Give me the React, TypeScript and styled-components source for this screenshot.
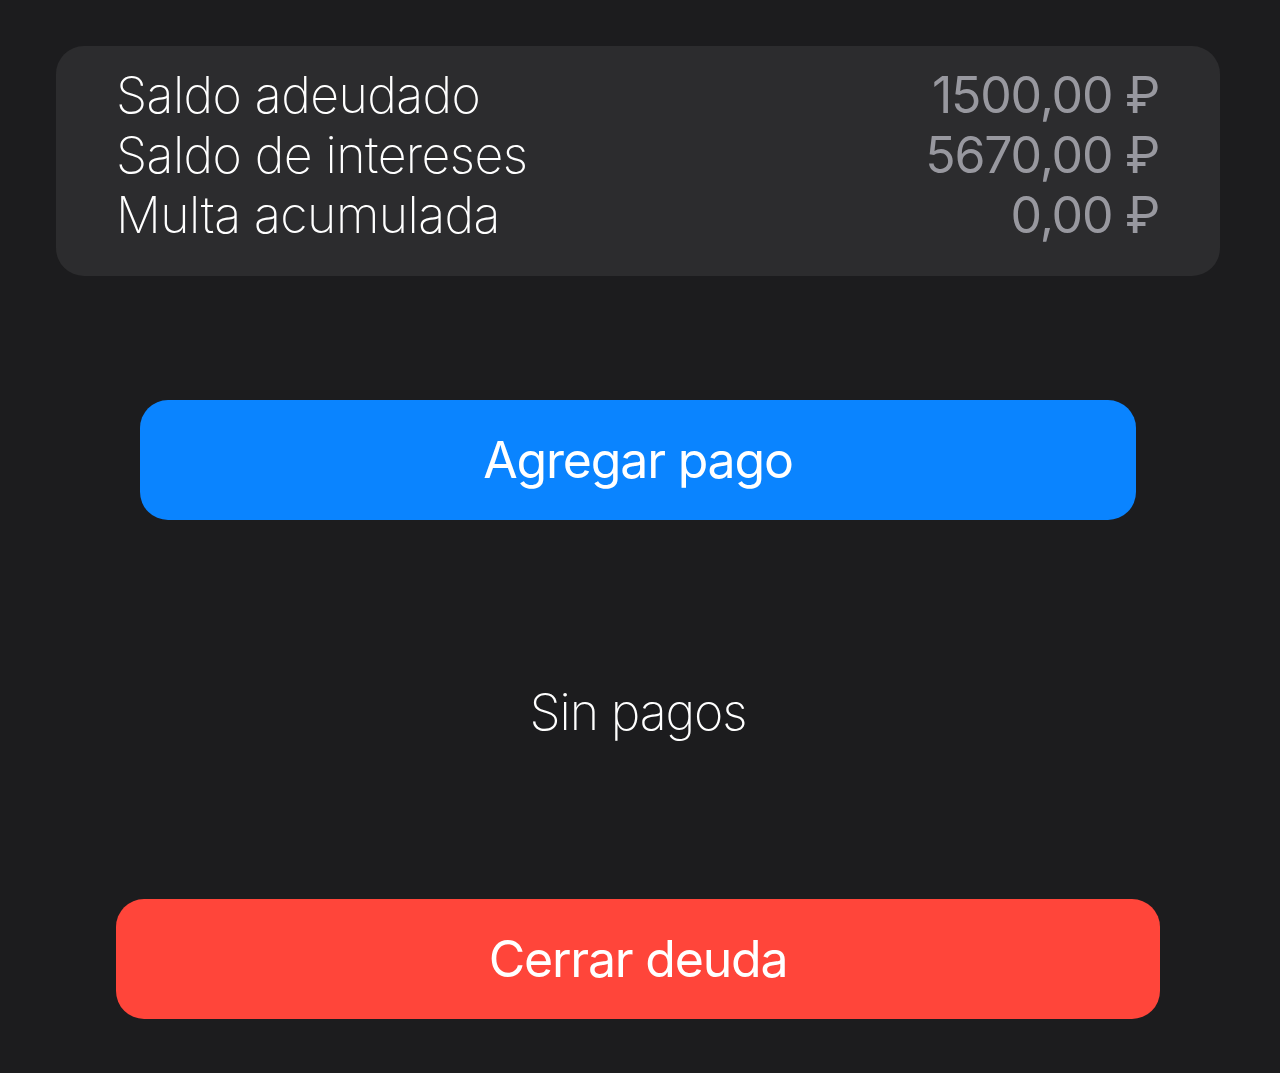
import React from "react";
import styled, { createGlobalStyle } from "styled-components";

const Global = createGlobalStyle`
  html, body {
    margin: 0;
    padding: 0;
    background: #1c1c1e;
  }
  body {
    font-family: Inter, "Noto Sans", "Liberation Sans", sans-serif;
    -webkit-font-smoothing: antialiased;
  }
`;

const Page = styled.div`
  min-height: 1073px;
  box-sizing: border-box;
  padding: 46px 60px 0 56px;
  display: flex;
  flex-direction: column;
  background: #1c1c1e;
`;

const Card = styled.div`
  background: #2c2c2e;
  border-radius: 28px;
  padding: 19px 61px 31px 60px;
  display: flex;
  flex-direction: column;
`;

const Row = styled.div`
  display: flex;
  justify-content: space-between;
  align-items: baseline;
  height: 60px;
  line-height: 60px;
  font-size: 50px;
`;

const Label = styled.span`
  color: #ffffff;
  font-weight: 200;
  letter-spacing: -0.55px;
`;

const Value = styled.span`
  color: #98989f;
  font-weight: 400;
  letter-spacing: -1.2px;
`;

const Button = styled.button<{ $color: string; $inset: number }>`
  display: flex;
  align-items: center;
  justify-content: center;
  height: 120px;
  margin: 0 ${(p) => p.$inset}px;
  border: none;
  border-radius: 28px;
  background: ${(p) => p.$color};
  color: #ffffff;
  font-family: inherit;
  font-size: 50px;
  font-weight: 400;
  letter-spacing: -1.2px;
  padding: 0;
`;

const Empty = styled.div`
  text-align: center;
  color: #ffffff;
  font-size: 50px;
  font-weight: 200;
  letter-spacing: -1.1px;
  line-height: 60px;
  margin: 162px 0 157px;
`;

const Spacer = styled.div`
  height: 124px;
`;

const rows = [
  ["Saldo adeudado", "1500,00 ₽"],
  ["Saldo de intereses", "5670,00 ₽"],
  ["Multa acumulada", "0,00 ₽"],
];

export default function App() {
  return (
    <>
      <Global />
      <Page>
        <Card>
          {rows.map(([l, v]) => (
            <Row key={l}>
              <Label>{l}</Label>
              <Value>{v}</Value>
            </Row>
          ))}
        </Card>
        <Spacer />
        <Button $color="#0a84ff" $inset={84}>Agregar pago</Button>
        <Empty>Sin pagos</Empty>
        <Button $color="#ff453a" $inset={60}>Cerrar deuda</Button>
      </Page>
    </>
  );
}
